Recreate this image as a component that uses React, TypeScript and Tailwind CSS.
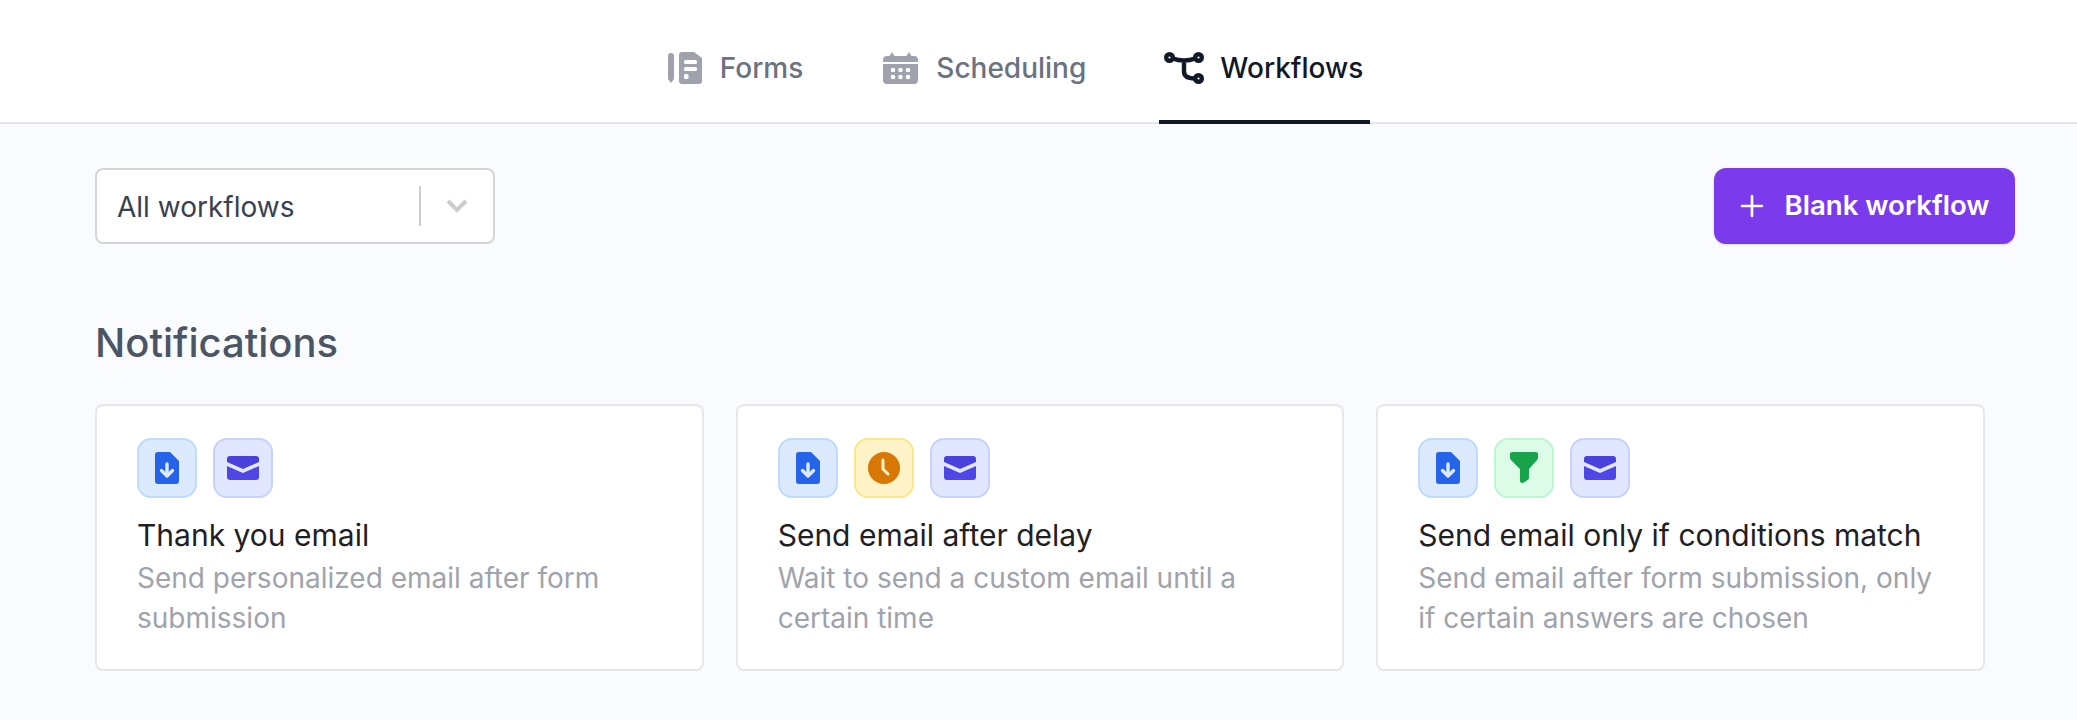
import React from "react";

const font = "font-['Inter',sans-serif]";

function FormsIcon() {
  return (
    <svg width="34" height="32" viewBox="0 0 34 32" className="text-[#9fa2ad]">
      <path d="M0 4a3 3 0 0 1 6 0v23l-3 4-3-4z" fill="currentColor" />
      <path d="M14 0h12l8 6v23a3 3 0 0 1-3 3H14a3 3 0 0 1-3-3V3a3 3 0 0 1 3-3z" fill="currentColor" />
      <rect x="16" y="8" width="13" height="4" rx="1.500" fill="#fff" />
      <rect x="16" y="15" width="13" height="4" rx="1.500" fill="#fff" />
      <rect x="16" y="22" width="4.500" height="5" rx="1.500" fill="#fff" />
    </svg>
  );
}

function CalendarIcon() {
  return (
    <svg width="35" height="32" viewBox="0 0 35 32" className="text-[#9fa2ad]">
      <path d="M9 0l2.500 4h12L26 0l2.500 4H31a4 4 0 0 1 4 4v2H0V8a4 4 0 0 1 4-4h2.500z" fill="currentColor" />
      <path d="M0 12h35v16a4 4 0 0 1-4 4H4a4 4 0 0 1-4-4z" fill="currentColor" />
      {[10, 17.5, 25].map((x) =>
        [18, 25].map((y) => <circle key={`${x}-${y}`} cx={x} cy={y} r="2.300" fill="#fff" />)
      )}
    </svg>
  );
}

function WorkflowIcon() {
  return (
    <svg width="40" height="32" viewBox="0 0 40 32" fill="none" stroke="#111827" strokeWidth="4.400">
      <circle cx="5.500" cy="5.500" r="3.300" />
      <circle cx="34.500" cy="5.500" r="3.300" />
      <circle cx="34.500" cy="26.500" r="3.300" />
      <path d="M9 6.500c3.500 1.500 7 2 11 2s7.500-.5 11-2M20 8.500v11c0 4.500 3.500 7 11 7" strokeLinecap="round" />
    </svg>
  );
}

function DocIcon() {
  return (
    <svg width="24" height="32" viewBox="0 0 24 32">
      <path d="M3 0h12l9 9v20a3 3 0 0 1-3 3H3a3 3 0 0 1-3-3V3a3 3 0 0 1 3-3z" fill="#2563eb" />
      <path d="M12 12v12M6.500 18.500L12 24l5.500-5.500" fill="none" stroke="#dbeafe" strokeWidth="3.400" strokeLinecap="round" strokeLinejoin="round" />
    </svg>
  );
}

function MailIcon() {
  return (
    <svg width="32" height="24" viewBox="0 0 32 24">
      <path d="M3 0h26a3 3 0 0 1 3 3v3L16 13 0 6V3a3 3 0 0 1 3-3z" fill="#4a40dc" />
      <path d="M0 10l16 7 16-7v11a3 3 0 0 1-3 3H3a3 3 0 0 1-3-3z" fill="#4f46e5" />
    </svg>
  );
}

function ClockIcon() {
  return (
    <svg width="32" height="32" viewBox="0 0 32 32">
      <circle cx="16" cy="16" r="16" fill="#d97706" />
      <path d="M15 8v9l5 5" fill="none" stroke="#fef3c7" strokeWidth="3" strokeLinecap="round" strokeLinejoin="round" />
    </svg>
  );
}

function FunnelIcon() {
  return (
    <svg width="28" height="32" viewBox="0 0 28 32">
      <path d="M2 0h24a2 2 0 0 1 2 2v4a3 3 0 0 1-1 2l-8 9v9a2 2 0 0 1-1 1.700l-4 2.800c-2 1-4 .5-4-2V17L1 8a3 3 0 0 1-1-2V2a2 2 0 0 1 2-2z" fill="#16a34a" />
    </svg>
  );
}

const tiles = {
  doc: { cls: "bg-[#dbeafe] border-[#bfdbfe]", icon: <DocIcon /> },
  mail: { cls: "bg-[#e0e7ff] border-[#c7d2fe]", icon: <MailIcon /> },
  clock: { cls: "bg-[#fef3c7] border-[#fde68a]", icon: <ClockIcon /> },
  funnel: { cls: "bg-[#dcfce7] border-[#bbf7d0]", icon: <FunnelIcon /> },
};

type TileName = keyof typeof tiles;

const cards: { title: string; lines: string[]; icons: TileName[] }[] = [
  {
    title: "Thank you email",
    lines: ["Send personalized email after form", "submission"],
    icons: ["doc", "mail"],
  },
  {
    title: "Send email after delay",
    lines: ["Wait to send a custom email until a", "certain time"],
    icons: ["doc", "clock", "mail"],
  },
  {
    title: "Send email only if conditions match",
    lines: ["Send email after form submission, only", "if certain answers are chosen"],
    icons: ["doc", "funnel", "mail"],
  },
];

export default function App() {
  return (
    <div className={`${font} w-[2077px] h-[720px] overflow-hidden bg-[#fafbfd]`}>
      <div className="h-[124px] bg-white border-b-2 border-[#e2e4e8] flex justify-center pr-[44px]">
        <div className="flex gap-[65px]">
          <div className="flex items-center gap-[18px] pl-[5px] pr-[10px] pt-[12px] h-[124px] text-[#6b7280] text-[28px] font-medium">
            <FormsIcon />
            <span>Forms</span>
          </div>
          <div className="flex items-center gap-[18px] pl-[5px] pr-[8px] pt-[12px] h-[124px] text-[#6b7280] text-[28px] font-medium">
            <CalendarIcon />
            <span>Scheduling</span>
          </div>
          <div className="flex items-center gap-[16px] pl-[5px] pr-[7px] pt-[16px] h-[124px] text-[#111827] text-[28px] font-medium border-b-4 border-[#111827]">
            <WorkflowIcon />
            <span>Workflows</span>
          </div>
        </div>
      </div>

      <div className="pl-[95px] pr-[62px] pt-[44px] flex items-center justify-between">
        <div className="w-[400px] h-[76px] bg-white border-2 border-[#d4d5d8] rounded-[8px] flex items-center pl-[20px]">
          <span className="flex-1 text-[28px] text-[#374151] pt-[2px]">All workflows</span>
          <div className="w-[2px] h-[40px] bg-[#cccccc]" />
          <svg width="22" height="14" viewBox="0 0 22 14" className="mx-[25px]" fill="none" stroke="#cccccc" strokeWidth="4">
            <path d="M2 2l9 9 9-9" />
          </svg>
        </div>
        <div className="w-[301px] h-[76px] bg-[#7c3aed] rounded-[12px] shadow-sm flex items-center justify-center gap-[21px] text-white text-[27.6px] font-semibold">
          <svg width="24" height="24" viewBox="0 0 24 24" fill="none" stroke="#fff" strokeWidth="2.600" strokeLinecap="round">
            <path d="M12 2v20M2 12h20" />
          </svg>
          <span>Blank workflow</span>
        </div>
      </div>

      <h2 className="pl-[95px] mt-[73px] text-[40px] leading-[52px] font-medium text-[#4b5563]">Notifications</h2>

      <div className="grid grid-cols-3 gap-[32px] pl-[95px] pr-[92px] mt-[35px]">
        {cards.map((card) => (
          <div key={card.title} className="h-[267px] bg-white border-2 border-[#e5e7eb] rounded-[8px] pl-[40px] pt-[32px]">
            <div className="flex gap-[16px]">
              {card.icons.map((name) => (
                <div key={name} className={`w-[60px] h-[60px] rounded-[14px] border-2 flex items-center justify-center ${tiles[name].cls}`}>
                  {tiles[name].icon}
                </div>
              ))}
            </div>
            <div className="mt-[17px] text-[30px] leading-[40px] text-[#1f2024]">{card.title}</div>
            <div className="mt-[3px] text-[28px] leading-[40px] text-[#9fa3ab]">
              {card.lines.map((line) => (
                <div key={line}>{line}</div>
              ))}
            </div>
          </div>
        ))}
      </div>
    </div>
  );
}
